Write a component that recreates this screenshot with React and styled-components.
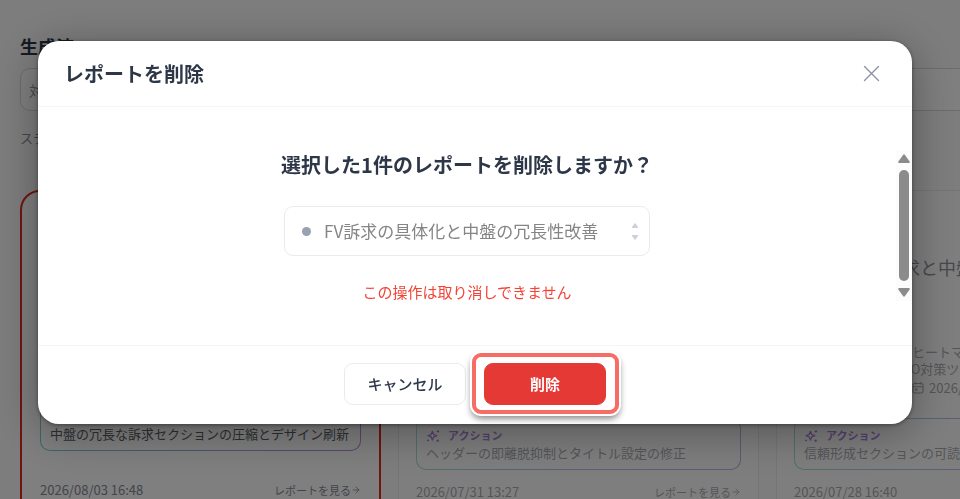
import React from 'react';
import styled, { createGlobalStyle } from 'styled-components';
import { ArrowRight } from 'lucide-react';

const colors = {
  text: '#2d3748',
  muted: '#858a94',
  border: '#e9ebef',
  danger: '#e53935',
  highlight: '#f76c64',
  purple: '#8f50d0',
};

const GlobalStyle = createGlobalStyle`
  * {
    box-sizing: border-box;
  }

  body {
    margin: 0;
    overflow: hidden;
    background: #fbfbfb;
    color: ${colors.text};
    font-family: 'Noto Sans CJK JP', 'Noto Sans', sans-serif;
  }

  button, input {
    font-family: inherit;
  }
`;

/* page behind the dialog */

const Page = styled.main`
  height: 100vh;
  overflow: hidden;
  padding: 34px 0 0 20px;
`;

const PageTitle = styled.h1`
  margin: 0 0 10px;
  font-size: 18px;
  line-height: 24px;
`;

const Search = styled.input`
  display: block;
  width: calc(100% + 20px);
  height: 43px;
  padding: 0 8px;
  border: 1px solid #d5d9df;
  border-radius: 10px;
  background: #fff;
  font-size: 14px;

  &::placeholder {
    color: #999;
    opacity: 1;
  }
`;

const Status = styled.p`
  margin: 16px 0 42px;
  color: ${colors.muted};
  font-size: 13px;
  line-height: 21px;
`;

const CardList = styled.div`
  display: grid;
  grid-template-columns: repeat(3, 361px);
  gap: 17px;
`;

const StyledCard = styled.article`
  display: flex;
  flex-direction: column;
  min-height: 330px;
  padding: ${props => (props.$selected ? '44px 18px 18px' : '64px 17px 18px')};
  border: ${props => (props.$selected ? '2px solid #e02b20' : '1px solid #e2e5e9')};
  border-radius: 20px;
  background: #fff;
  opacity: ${props => (props.$selected ? 1 : 0.7)};
`;

const CardTitle = styled.h2`
  margin: 0 0 64px;
  overflow: hidden;
  color: #5f6570;
  font-size: 18px;
  font-weight: 400;
  line-height: 24px;
  white-space: nowrap;
`;

const Summary = styled.div`
  display: flex;
  gap: 8px;
  margin-bottom: 20px;
`;

const Thumbnail = styled.div`
  flex: 0 0 84px;
  border-radius: 6px;
  background: #edf0f4;
`;

const Meta = styled.div`
  overflow: hidden;
  color: ${colors.muted};
  font-size: 13px;
  line-height: 17px;
  white-space: nowrap;
`;

const Period = styled.div`
  display: flex;
  align-items: center;
  line-height: 21px;

  svg {
    margin-right: 5px;
  }
`;

const Action = styled.div`
  padding: 8px 9px 7px;
  border: 1px solid transparent;
  border-radius: 10px;
  background:
    linear-gradient(#fff, #fff) padding-box,
    linear-gradient(90deg, #7fd0cd, #93a4e2 50%, #b88ae0) border-box;
`;

const ActionLabel = styled.div`
  display: flex;
  align-items: center;
  gap: 8px;
  color: ${colors.purple};
  font-size: 11px;
  font-weight: 700;
  line-height: 17px;
`;

const ActionText = styled.div`
  overflow: hidden;
  color: ${props => (props.$strong ? '#5a5f68' : colors.muted)};
  font-size: 13px;
  line-height: 18px;
  white-space: nowrap;
`;

const CardFooter = styled.footer`
  display: flex;
  align-items: center;
  justify-content: space-between;
  margin-top: ${props => (props.$selected ? '29px' : '12px')};
  color: ${colors.muted};
  font-size: 13px;
  line-height: 20px;
`;

const ReportLink = styled.a`
  display: flex;
  align-items: center;
  color: inherit;
  font-size: 11px;
  text-decoration: none;
`;

/* dialog */

const Overlay = styled.div`
  position: fixed;
  inset: 0;
  padding: 41px 48px 0 38px;
  background: rgba(0, 0, 0, 0.5);
`;

const Dialog = styled.section`
  overflow: hidden;
  border-radius: 21px;
  background: #fff;
  box-shadow: 0 8px 44px rgba(0, 0, 0, 0.34), 0 1px 4px rgba(0, 0, 0, 0.4);
`;

const DialogHeader = styled.header`
  display: flex;
  align-items: center;
  justify-content: space-between;
  height: 66px;
  padding: 0 32px 0 26px;
  border-bottom: 1px solid #f4f5f6;
`;

const DialogTitle = styled.h2`
  margin: 0;
  font-size: 20px;
  font-weight: 700;
  line-height: 28px;
`;

const CloseButton = styled.button`
  display: flex;
  padding: 0;
  border: 0;
  background: none;
  color: #8a94a6;
  cursor: pointer;
`;

const DialogBody = styled.div`
  display: flex;
  padding: 43px 0 41px;
`;

const Content = styled.div`
  display: flex;
  flex: 1;
  flex-direction: column;
  align-items: center;
`;

const Question = styled.h3`
  margin: 0 0 26px;
  font-size: 20px;
  font-weight: 700;
  line-height: 30px;
`;

const TargetList = styled.ul`
  display: flex;
  align-items: center;
  width: 366px;
  height: 50px;
  margin: 0 0 24px;
  padding: 0 10px 0 17px;
  border: 1px solid ${colors.border};
  border-radius: 9px;
  list-style: none;
`;

const Target = styled.li`
  display: flex;
  flex: 1;
  align-items: center;
  gap: 13px;
  color: #858585;
  font-size: 17px;
  line-height: 24px;
  white-space: nowrap;

  &::before {
    content: '';
    width: 9px;
    height: 9px;
    border-radius: 50%;
    background: #98a1b0;
  }
`;

const Warning = styled.p`
  margin: 0;
  color: #f44336;
  font-size: 15px;
  line-height: 24px;
`;

const ScrollBar = styled.div`
  display: flex;
  flex-direction: column;
  align-items: center;
  justify-content: space-between;
  width: 16px;
  height: 151px;
  padding: 4px 0;
  background: #fcfcfc;
`;

const Thumb = styled.div`
  width: 10px;
  height: 111px;
  border-radius: 5px;
  background: #8b8b8b;
`;

const DialogFooter = styled.footer`
  display: flex;
  justify-content: center;
  gap: 18px;
  padding: 17px 0 19px;
  border-top: 1px solid #f4f5f6;
`;

const Button = styled.button`
  width: 122px;
  height: 42px;
  padding: 0;
  border: 1px solid ${colors.border};
  border-radius: 9px;
  background: #fff;
  color: ${colors.text};
  font-size: 15px;
  font-weight: 500;
  line-height: 20px;
  cursor: pointer;
`;

const DeleteButton = styled(Button)`
  position: relative;
  border-color: ${colors.danger};
  background: ${colors.danger};
  color: #fff;
  font-weight: 700;

  /* guide frame around the button */
  &::after {
    content: '';
    position: absolute;
    inset: -11px -14px -10px -13px;
    border: 4px solid ${colors.highlight};
    border-radius: 9px;
    box-shadow: 0 0 0 2px #fff, 0 4px 6px 1px rgba(0, 0, 0, 0.45);
  }
`;

const Sparkle = () => (
  <svg width="14" height="14" viewBox="0 0 24 24" fill="none" stroke="currentColor" strokeWidth="2.2" strokeLinejoin="round">
    <path d="M11 4l2.1 5.4 5.4 2.1-5.4 2.1L11 19l-2.1-5.4-5.4-2.1 5.4-2.1z" />
    <circle cx="20.5" cy="4" r="2" fill="currentColor" stroke="none" />
    <circle cx="20" cy="20" r="2" fill="currentColor" stroke="none" />
    <circle cx="3.5" cy="19.5" r="1.7" fill="currentColor" stroke="none" />
  </svg>
);

const CalendarIcon = () => (
  <svg width="12" height="12" viewBox="0 0 24 24" fill="none" stroke="currentColor" strokeWidth="2.2">
    <rect x="2" y="3" width="20" height="19" rx="3" />
    <path d="M2 9.5h20M7 0v5M17 0v5" />
    <rect x="6" y="13" width="5" height="4" fill="currentColor" stroke="none" />
  </svg>
);

const Triangle = ({ size, color, down }) => (
  <svg width={size} height={size - 3} viewBox="0 0 12 9" fill={color} aria-hidden="true">
    <path d={down ? 'M1.3 0h9.4q1.6 0 .9 1.4L7 8q-1 1.4-2 0L.4 1.4Q-.3 0 1.3 0z' : 'M1.3 9h9.4q1.6 0 .9-1.4L7 1Q6-.4 5 1L.4 7.6Q-.3 9 1.3 9z'} />
  </svg>
);

const Stepper = styled.div`
  display: flex;
  flex-direction: column;
  gap: 7px;
`;

const reports = [
  {
    title: 'FV訴求の具体化と中盤の冗長性改善',
    action: '中盤の冗長な訴求セクションの圧縮とデザイン刷新',
    date: '2026/08/03 16:48',
    period: '2026/07/27',
    selected: true,
  },
  {
    title: 'ヘッダー離脱の抑制と設定修正',
    action: 'ヘッダーの即離脱抑制とタイトル設定の修正',
    date: '2026/07/31 13:27',
    period: '2026/07/24',
  },
  {
    title: '冒頭部分の訴求と中盤の信頼形成',
    action: '信頼形成セクションの可読性改善とデザイン刷新',
    date: '2026/07/28 16:40',
    period: '2026/07/21',
  },
];

const Card = ({ data }) => (
  <StyledCard $selected={data.selected}>
    <CardTitle>{data.title}</CardTitle>
    <Summary>
      <Thumbnail />
      <Meta>
        <div>分析ヒートマップ</div>
        <div>LLMO対策ツール</div>
        <Period>期間<CalendarIcon />{data.period}</Period>
      </Meta>
    </Summary>
    <Action>
      <ActionLabel><Sparkle />アクション</ActionLabel>
      <ActionText $strong={data.selected}>{data.action}</ActionText>
    </Action>
    <CardFooter $selected={data.selected}>
      <time>{data.date}</time>
      <ReportLink href="#report">レポートを見る<ArrowRight size={10} /></ReportLink>
    </CardFooter>
  </StyledCard>
);

export default function App() {
  return (
    <>
      <GlobalStyle />
      <Page>
        <PageTitle>生成済</PageTitle>
        <Search aria-label="レポートを検索" placeholder="対象ページを検索" />
        <Status>ステータス</Status>
        <CardList>
          {reports.map(report => <Card key={report.date} data={report} />)}
        </CardList>
      </Page>

      <Overlay>
        <Dialog role="dialog" aria-modal="true" aria-labelledby="dialog-title">
          <DialogHeader>
            <DialogTitle id="dialog-title">レポートを削除</DialogTitle>
            <CloseButton type="button" aria-label="閉じる">
              <svg width="17" height="17" viewBox="0 0 17 17" stroke="currentColor" strokeWidth="1.4" strokeLinecap="round">
                <path d="M1.5 1.5l14 14M15.5 1.5l-14 14" />
              </svg>
            </CloseButton>
          </DialogHeader>
          <DialogBody>
            <Content>
              <Question>選択した1件のレポートを削除しますか？</Question>
              <TargetList>
                <Target>FV訴求の具体化と中盤の冗長性改善</Target>
                <Stepper>
                  <Triangle size={8} color="#cdd1d7" />
                  <Triangle size={8} color="#cdd1d7" down />
                </Stepper>
              </TargetList>
              <Warning>この操作は取り消しできません</Warning>
            </Content>
            <ScrollBar>
              <Triangle size={12} color="#8b8b8b" />
              <Thumb />
              <Triangle size={12} color="#8b8b8b" down />
            </ScrollBar>
          </DialogBody>
          <DialogFooter>
            <Button type="button">キャンセル</Button>
            <DeleteButton type="button">削除</DeleteButton>
          </DialogFooter>
        </Dialog>
      </Overlay>
    </>
  );
}
